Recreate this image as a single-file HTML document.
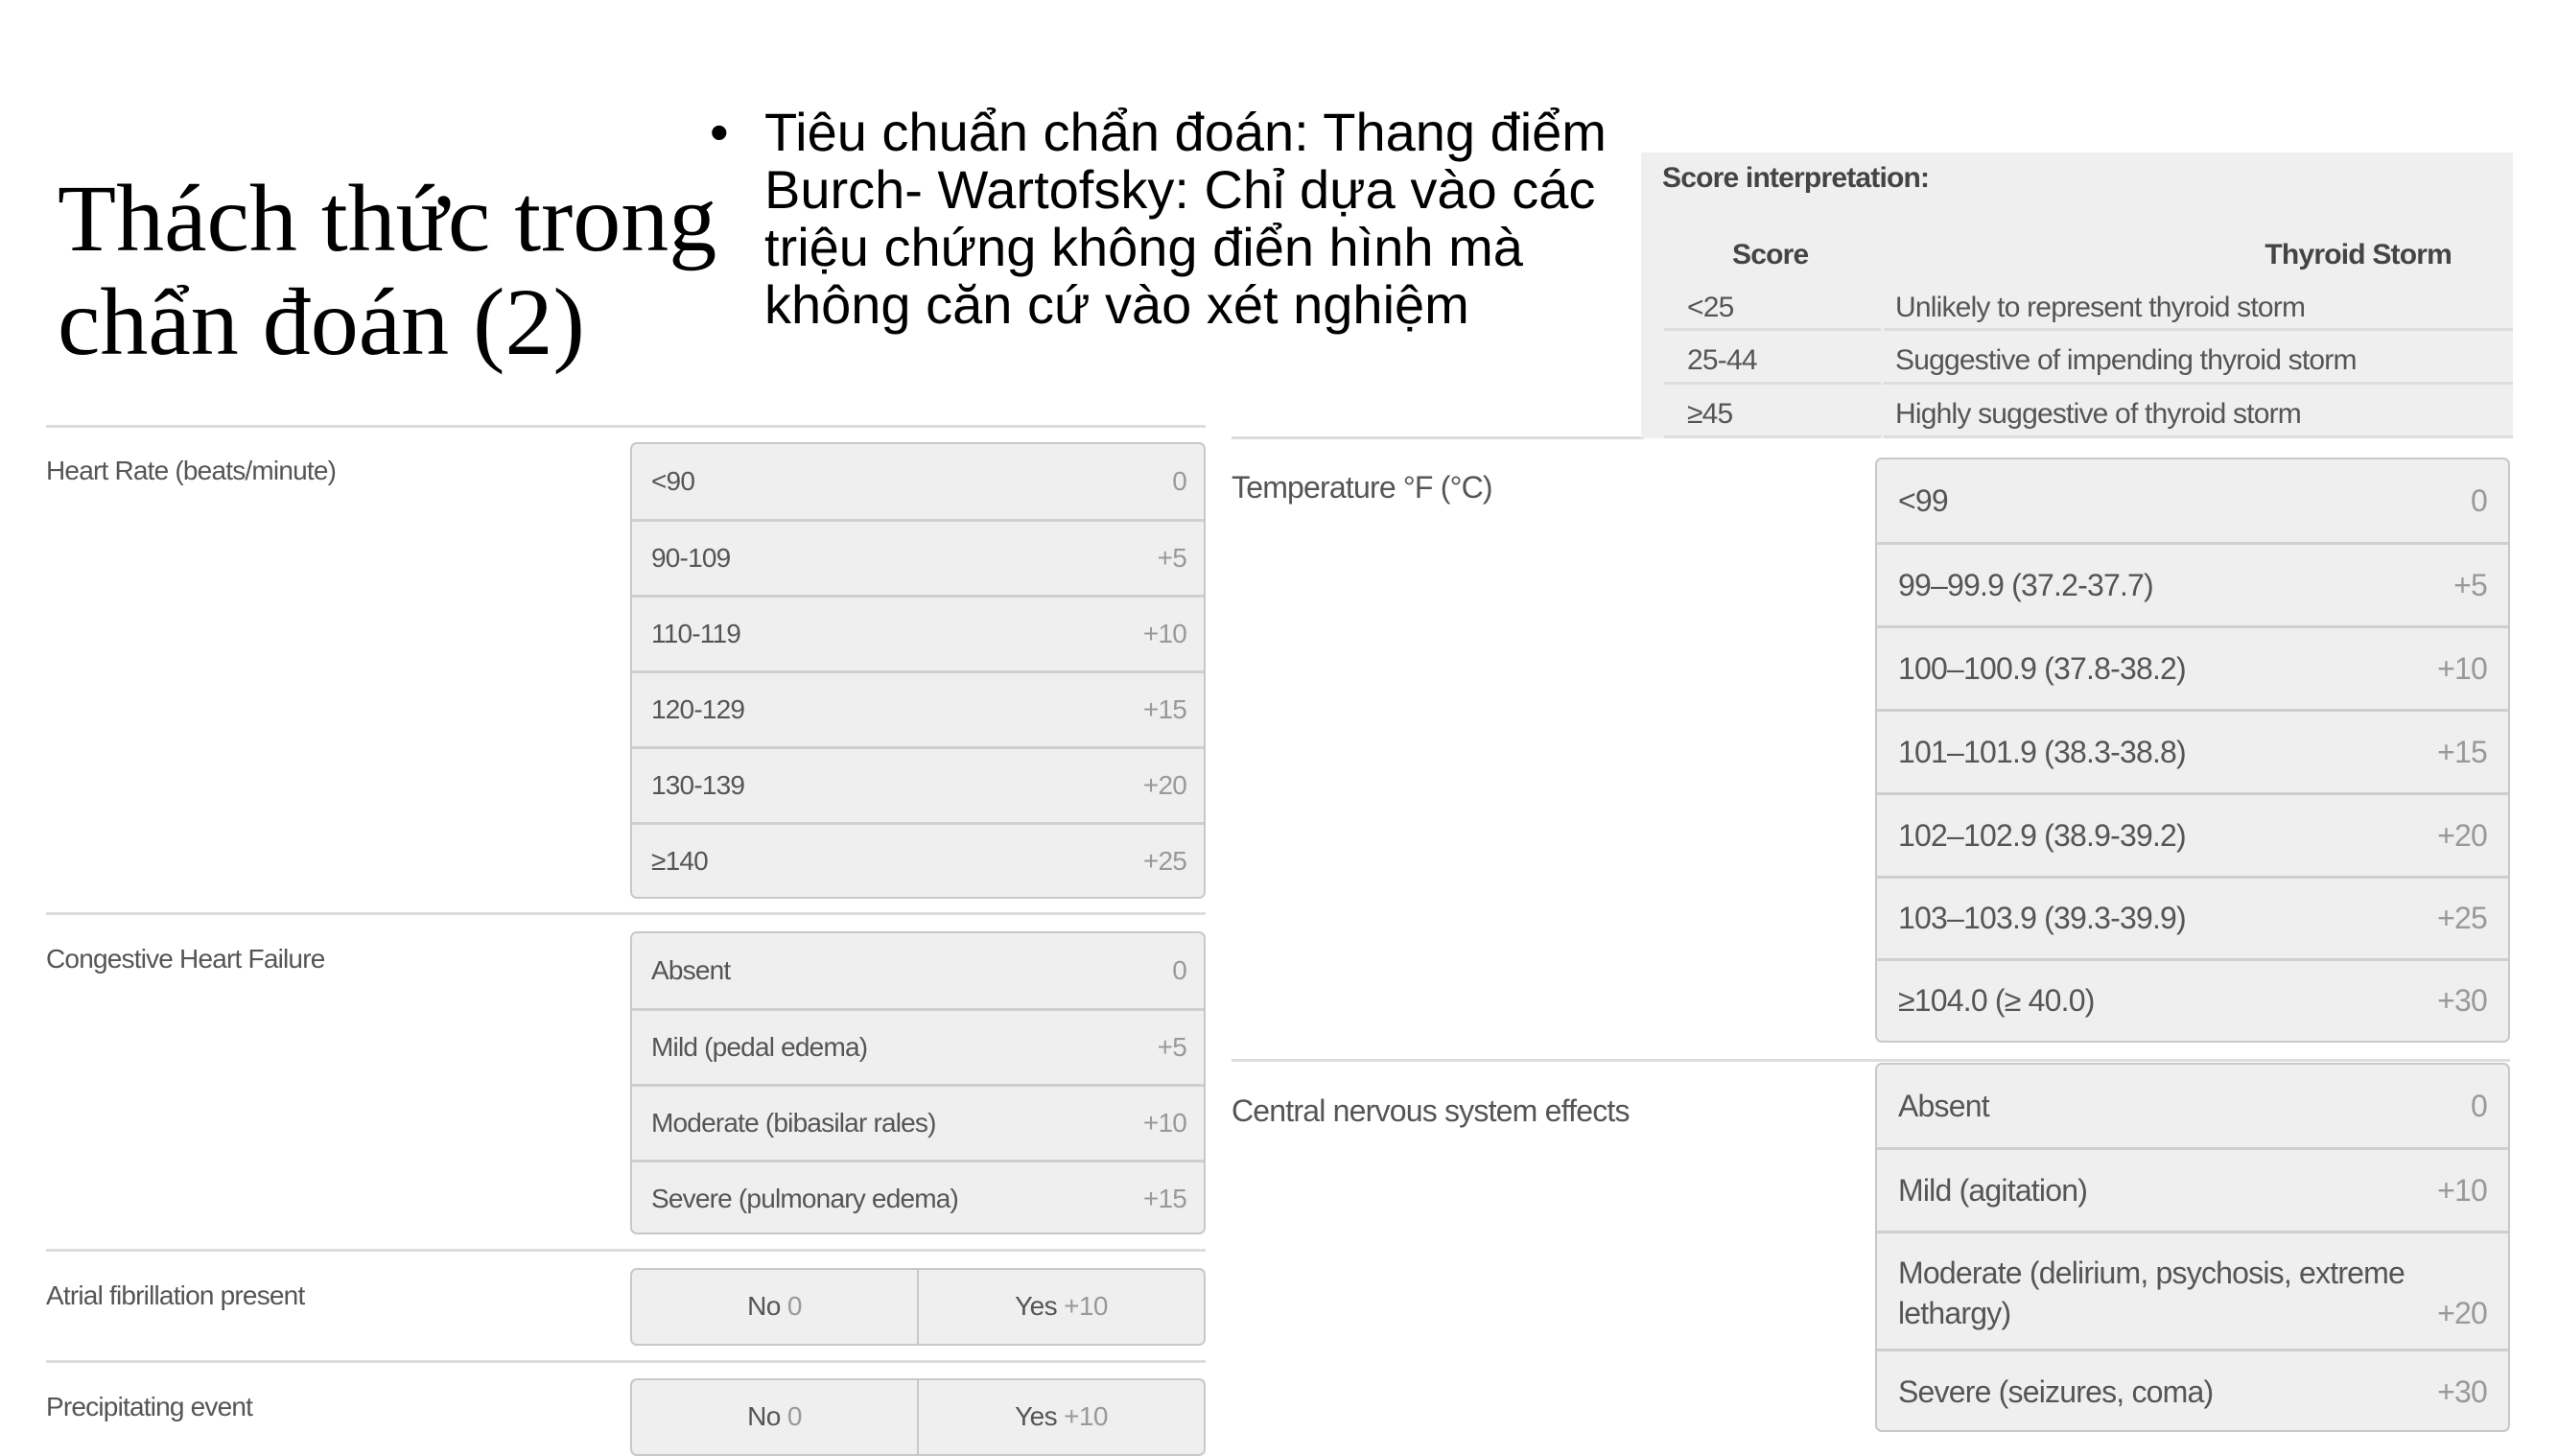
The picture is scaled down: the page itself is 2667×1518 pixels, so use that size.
<!DOCTYPE html>
<html><head><meta charset="utf-8"><style>
*{margin:0;padding:0;box-sizing:border-box}
body{width:2667px;height:1500px;background:#fff;position:relative;overflow:hidden;font-family:"Liberation Sans",sans-serif;color:#555}
.a{position:absolute}
.title{font-family:"Liberation Serif",serif;font-size:100px;color:#000;line-height:108px;left:60px;top:174px;white-space:nowrap}
.bul{left:797px;top:108px;font-size:56px;color:#000;line-height:60px;white-space:nowrap}
.dot{left:740px;top:108px;font-size:56px;line-height:60px;color:#000}
.hr{height:3px;background:#ddd}
.lbl{font-size:28px;letter-spacing:-0.8px;color:#555}
.box{border:2px solid #c8c8c8;border-radius:7px;background:#efefef;overflow:hidden}
.row{display:flex;justify-content:space-between;align-items:center;padding:0 18px 0 20px;border-top:3px solid #cfcfcf;font-size:28px;letter-spacing:-0.8px;color:#555}
.row:first-child{border-top:none}
.row span:last-child{color:#999}
.big .row{font-size:32px;padding:0 22px 0 22px}
.split{display:flex}
.split div{flex:1;text-align:center;font-size:28px;letter-spacing:-0.6px;line-height:76px;color:#555}
.split div+div{border-left:2px solid #c8c8c8}
.split span{color:#999}
.sc{background:#efefef;left:1711px;top:159px;width:909px;height:298px}
.sc .t{position:absolute;font-size:30px;letter-spacing:-0.8px;color:#555}
.sc .b{font-weight:bold;color:#444}
.scl{position:absolute;height:3px;background:#ddd}
</style></head><body>
<div class="a title">Thách thức trong<br>chẩn đoán (2)</div>
<div class="a dot">•</div>
<div class="a bul">Tiêu chuẩn chẩn đoán: Thang điểm<br>Burch- Wartofsky: Chỉ dựa vào các<br>triệu chứng không điển hình mà<br>không căn cứ vào xét nghiệm</div>

<div class="a hr" style="left:48px;top:443px;width:1209px"></div>
<div class="a lbl" style="left:48px;top:475px">Heart Rate (beats/minute)</div>
<div class="a box" style="left:657px;top:461px;width:600px;height:476px">
<div class="row" style="height:78px"><span>&lt;90</span><span>0</span></div>
<div class="row" style="height:79px"><span>90-109</span><span>+5</span></div>
<div class="row" style="height:79px"><span>110-119</span><span>+10</span></div>
<div class="row" style="height:79px"><span>120-129</span><span>+15</span></div>
<div class="row" style="height:79px"><span>130-139</span><span>+20</span></div>
<div class="row" style="height:79px"><span>≥140</span><span>+25</span></div>
</div>
<div class="a hr" style="left:48px;top:951px;width:1209px"></div>
<div class="a lbl" style="left:48px;top:984px">Congestive Heart Failure</div>
<div class="a box" style="left:657px;top:971px;width:600px;height:316px">
<div class="row" style="height:78px"><span>Absent</span><span>0</span></div>
<div class="row" style="height:79px"><span>Mild (pedal edema)</span><span>+5</span></div>
<div class="row" style="height:79px"><span>Moderate (bibasilar rales)</span><span>+10</span></div>
<div class="row" style="height:78px"><span>Severe (pulmonary edema)</span><span>+15</span></div>
</div>
<div class="a hr" style="left:48px;top:1302px;width:1209px"></div>
<div class="a lbl" style="left:48px;top:1335px">Atrial fibrillation present</div>
<div class="a box split" style="left:657px;top:1322px;width:600px;height:81px"><div>No <span>0</span></div><div>Yes <span>+10</span></div></div>
<div class="a hr" style="left:48px;top:1418px;width:1209px"></div>
<div class="a lbl" style="left:48px;top:1451px">Precipitating event</div>
<div class="a box split" style="left:657px;top:1437px;width:600px;height:81px"><div>No <span>0</span></div><div>Yes <span>+10</span></div></div>

<div class="a hr" style="left:1284px;top:455px;width:430px"></div>
<div class="a sc">
<div class="t b" style="left:22px;top:10px">Score interpretation:</div>
<div class="t b" style="left:95px;top:90px">Score</div>
<div class="t b" style="right:64px;top:90px">Thyroid Storm</div>
<div class="t" style="left:48px;top:145px">&lt;25</div><div class="t" style="left:265px;top:145px">Unlikely to represent thyroid storm</div>
<div class="t" style="left:48px;top:200px">25-44</div><div class="t" style="left:265px;top:200px">Suggestive of impending thyroid storm</div>
<div class="t" style="left:48px;top:256px">≥45</div><div class="t" style="left:265px;top:256px">Highly suggestive of thyroid storm</div>
<div class="scl" style="left:24px;width:226px;top:183px"></div><div class="scl" style="left:253px;right:0;top:183px"></div>
<div class="scl" style="left:24px;width:226px;top:239px"></div><div class="scl" style="left:253px;right:0;top:239px"></div>
<div class="scl" style="left:24px;width:226px;top:295px"></div><div class="scl" style="left:253px;right:0;top:295px"></div>
</div>
<div class="a lbl" style="left:1284px;top:490px;font-size:32px">Temperature °F (°C)</div>
<div class="a box big" style="left:1955px;top:477px;width:662px;height:610px">
<div class="row" style="height:86px"><span>&lt;99</span><span>0</span></div>
<div class="row" style="height:87px"><span>99–99.9 (37.2-37.7)</span><span>+5</span></div>
<div class="row" style="height:87px"><span>100–100.9 (37.8-38.2)</span><span>+10</span></div>
<div class="row" style="height:87px"><span>101–101.9 (38.3-38.8)</span><span>+15</span></div>
<div class="row" style="height:87px"><span>102–102.9 (38.9-39.2)</span><span>+20</span></div>
<div class="row" style="height:86px"><span>103–103.9 (39.3-39.9)</span><span>+25</span></div>
<div class="row" style="height:86px"><span>≥104.0 (≥ 40.0)</span><span>+30</span></div>
</div>
<div class="a hr" style="left:1284px;top:1104px;width:1333px"></div>
<div class="a lbl" style="left:1284px;top:1140px;font-size:32px">Central nervous system effects</div>
<div class="a box big" style="left:1955px;top:1108px;width:662px;height:385px">
<div class="row" style="height:86px"><span>Absent</span><span>0</span></div>
<div class="row" style="height:87px"><span>Mild (agitation)</span><span>+10</span></div>
<div class="row" style="height:123px;align-items:flex-end;padding-bottom:16px"><span style="line-height:42px">Moderate (delirium, psychosis, extreme<br>lethargy)</span><span style="line-height:42px">+20</span></div>
<div class="row" style="height:87px"><span>Severe (seizures, coma)</span><span>+30</span></div>
</div>
</body></html>
